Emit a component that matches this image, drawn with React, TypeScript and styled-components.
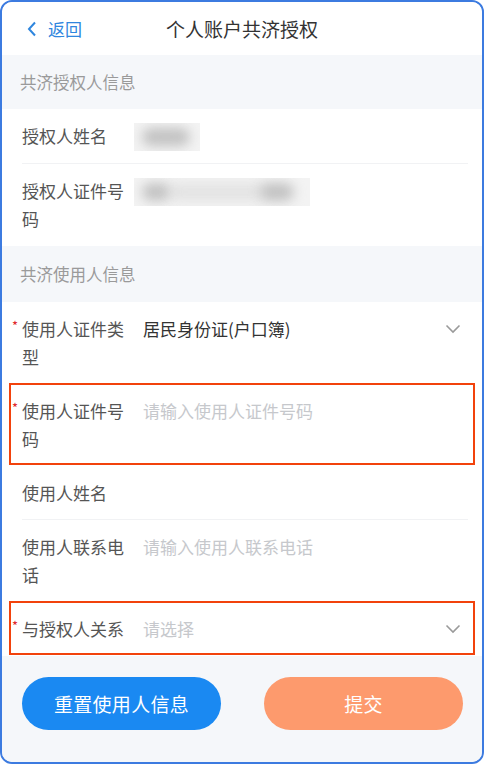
import React from "react";
import styled, { createGlobalStyle } from "styled-components";

const Global = createGlobalStyle`
  html, body { margin: 0; padding: 0; background: #ffffff; }
  * { box-sizing: border-box; }
  body { font-family: "Noto Sans CJK SC", "Noto Sans", sans-serif; }
`;

const Frame = styled.div`
  width: 484px;
  height: 764px;
  border: 2px solid #3c7be0;
  border-radius: 12px;
  overflow: hidden;
  background: #f5f7fa;
  display: flex;
  flex-direction: column;
`;

const NavBar = styled.header`
  height: 53px;
  flex: none;
  background: #fff;
  display: grid;
  grid-template-columns: 1fr auto 1fr;
  align-items: center;
  padding: 0 25px;
`;

const Back = styled.div`
  display: flex;
  align-items: center;
  gap: 11px;
  color: #2f86de;
  font-size: 17px;
`;

const Title = styled.h1`
  margin: 0;
  font-size: 19px;
  font-weight: 400;
  color: #333;
`;

const SectionTitle = styled.div<{ $h: number }>`
  height: ${(p) => p.$h}px;
  flex: none;
  display: flex;
  align-items: center;
  padding-left: 18px;
  font-size: 16.5px;
  color: #9a9a9a;
  background: #f5f7fa;
`;

const Group = styled.div`
  background: #fff;
  flex: none;
`;

const Row = styled.div<{ $flag?: boolean; $line?: boolean }>`
  position: relative;
  display: flex;
  align-items: flex-start;
  padding: 13px 22px 13px 18px;
  background: #fff;
  &::before {
    content: "";
    display: ${(p) => (p.$flag ? "block" : "none")};
    position: absolute;
    top: -1px;
    bottom: 1px;
    left: 7px;
    right: 7px;
    border: 2px solid #f2420c;
    pointer-events: none;
  }
  &::after {
    content: "";
    display: ${(p) => (p.$line ? "block" : "none")};
    position: absolute;
    left: 20px;
    right: 14px;
    bottom: 0;
    height: 1px;
    background: #f1f2f4;
  }
`;

const Label = styled.div<{ $req?: boolean }>`
  position: relative;
  width: 110px;
  flex: none;
  padding-left: 2px;
  font-size: 17px;
  line-height: 28px;
  color: #555;
  &::before {
    content: "*";
    display: ${(p) => (p.$req ? "block" : "none")};
    position: absolute;
    left: -8px;
    top: -3px;
    color: #e0262a;
    font-size: 13px;
  }
`;

const Value = styled.div<{ $placeholder?: boolean }>`
  flex: 1;
  margin-left: 13px;
  font-size: 17px;
  line-height: 28px;
  color: ${(p) => (p.$placeholder ? "#c6c8cc" : "#333")};
`;

const Redacted = styled.div<{ $w: number }>`
  margin-left: 4px;
  margin-top: 1px;
  width: ${(p) => p.$w}px;
  height: 28px;
  background: #f3f3f3;
  position: relative;
  overflow: hidden;
`;

const Blob = styled.div<{ $l: number; $w: number; $o?: number }>`
  position: absolute;
  left: ${(p) => p.$l}px;
  top: 5px;
  width: ${(p) => p.$w}px;
  height: 18px;
  border-radius: 9px;
  background: #c2c2c2;
  opacity: ${(p) => p.$o ?? 1};
  filter: blur(6px);
`;

const Chevron = styled.svg`
  flex: none;
  margin-top: 9px;
  margin-right: -1px;
`;

const Footer = styled.div`
  flex: 1;
  display: flex;
  justify-content: space-between;
  padding: 21px 19px 0 20px;
  background: #f5f7fa;
`;

const Button = styled.button<{ $tone: "blue" | "orange" }>`
  width: 199px;
  height: 53px;
  border: none;
  border-radius: 27px;
  background: ${(p) => (p.$tone === "blue" ? "#1a89f2" : "#fd9a6d")};
  color: #fff;
  font-family: inherit;
  font-size: 19px;
  letter-spacing: 0.3px;
`;

const Down = () => (
  <Chevron width="16" height="10" viewBox="0 0 16 10">
    <path d="M1.5 1.5 L8 8 L14.5 1.5" fill="none" stroke="#9a9a9a" strokeWidth="1.6" />
  </Chevron>
);

export default function App() {
  return (
    <>
      <Global />
      <Frame>
        <NavBar>
          <Back>
            <svg width="10" height="16" viewBox="0 0 10 16">
              <path d="M8 1.5 L2 8 L8 14.5" fill="none" stroke="#2f86de" strokeWidth="2" />
            </svg>
            <span>返回</span>
          </Back>
          <Title>个人账户共济授权</Title>
          <div />
        </NavBar>
        <SectionTitle $h={54}>共济授权人信息</SectionTitle>
        <Group>
          <Row $line>
            <Label>授权人姓名</Label>
            <Redacted $w={66}>
              <Blob $l={8} $w={48} />
            </Redacted>
          </Row>
          <Row>
            <Label>授权人证件号码</Label>
            <Redacted $w={176}>
              <Blob $l={8} $w={28} />
              <Blob $l={34} $w={100} $o={0.3} />
              <Blob $l={126} $w={34} />
            </Redacted>
          </Row>
        </Group>
        <SectionTitle $h={56}>共济使用人信息</SectionTitle>
        <Group>
          <Row>
            <Label $req>使用人证件类型</Label>
            <Value>居民身份证(户口簿)</Value>
            <Down />
          </Row>
          <Row $flag>
            <Label $req>使用人证件号码</Label>
            <Value $placeholder>请输入使用人证件号码</Value>
          </Row>
          <Row $line>
            <Label>使用人姓名</Label>
            <Value />
          </Row>
          <Row>
            <Label>使用人联系电话</Label>
            <Value $placeholder>请输入使用人联系电话</Value>
          </Row>
          <Row $flag>
            <Label $req>与授权人关系</Label>
            <Value $placeholder>请选择</Value>
            <Down />
          </Row>
        </Group>
        <Footer>
          <Button $tone="blue">重置使用人信息</Button>
          <Button $tone="orange">提交</Button>
        </Footer>
      </Frame>
    </>
  );
}
